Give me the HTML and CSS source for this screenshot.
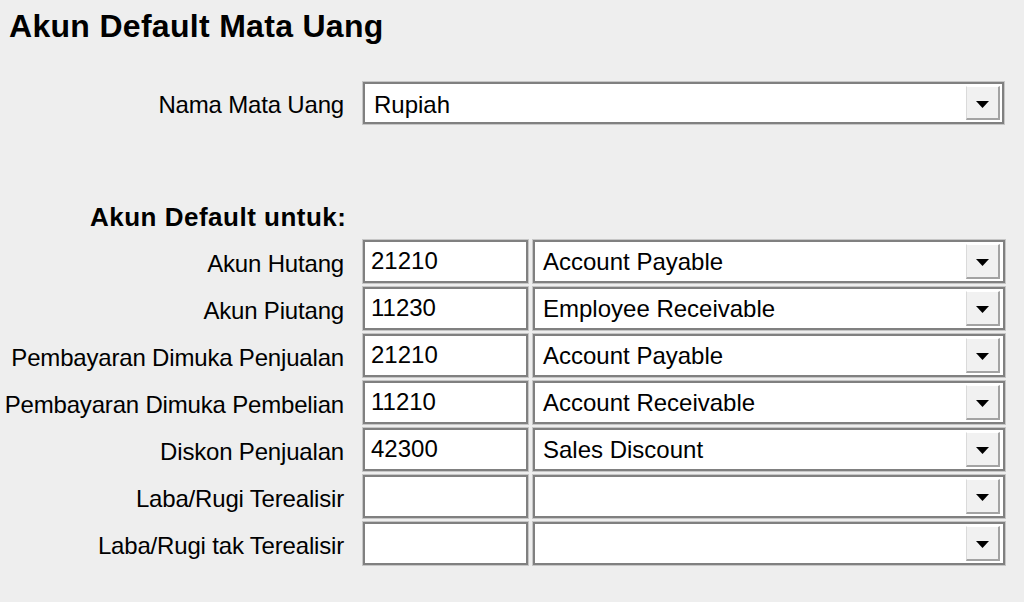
FILE: index.html
```html
<!DOCTYPE html>
<html lang="id">
<head>
<meta charset="utf-8">
<title>Akun Default Mata Uang</title>
<link rel="stylesheet" href="styles.css">
</head>
<body>
<div class="page">
  <h1 class="title">Akun Default Mata Uang</h1>

  <div class="row row-currency">
    <span class="lbl">Nama Mata Uang</span>
    <div class="combo combo-currency">
      <span class="combo-text">Rupiah</span>
      <span class="drop"><svg width="13" height="7" viewBox="0 0 13 7"><polygon points="0,0 13,0 6.5,7" fill="#000"/></svg></span>
    </div>
  </div>

  <div class="section">Akun Default untuk:</div>

  <div class="rows">
    <div class="row">
      <span class="lbl">Akun Hutang</span>
      <div class="edit">21210</div>
      <div class="combo"><span class="combo-text">Account Payable</span><span class="drop"><svg width="13" height="7" viewBox="0 0 13 7"><polygon points="0,0 13,0 6.5,7" fill="#000"/></svg></span></div>
    </div>
    <div class="row">
      <span class="lbl">Akun Piutang</span>
      <div class="edit">11230</div>
      <div class="combo"><span class="combo-text">Employee Receivable</span><span class="drop"><svg width="13" height="7" viewBox="0 0 13 7"><polygon points="0,0 13,0 6.5,7" fill="#000"/></svg></span></div>
    </div>
    <div class="row">
      <span class="lbl">Pembayaran Dimuka Penjualan</span>
      <div class="edit">21210</div>
      <div class="combo"><span class="combo-text">Account Payable</span><span class="drop"><svg width="13" height="7" viewBox="0 0 13 7"><polygon points="0,0 13,0 6.5,7" fill="#000"/></svg></span></div>
    </div>
    <div class="row">
      <span class="lbl">Pembayaran Dimuka Pembelian</span>
      <div class="edit">11210</div>
      <div class="combo"><span class="combo-text">Account Receivable</span><span class="drop"><svg width="13" height="7" viewBox="0 0 13 7"><polygon points="0,0 13,0 6.5,7" fill="#000"/></svg></span></div>
    </div>
    <div class="row">
      <span class="lbl">Diskon Penjualan</span>
      <div class="edit">42300</div>
      <div class="combo"><span class="combo-text">Sales Discount</span><span class="drop"><svg width="13" height="7" viewBox="0 0 13 7"><polygon points="0,0 13,0 6.5,7" fill="#000"/></svg></span></div>
    </div>
    <div class="row">
      <span class="lbl">Laba/Rugi Terealisir</span>
      <div class="edit"></div>
      <div class="combo"><span class="combo-text"></span><span class="drop"><svg width="13" height="7" viewBox="0 0 13 7"><polygon points="0,0 13,0 6.5,7" fill="#000"/></svg></span></div>
    </div>
    <div class="row">
      <span class="lbl">Laba/Rugi tak Terealisir</span>
      <div class="edit"></div>
      <div class="combo"><span class="combo-text"></span><span class="drop"><svg width="13" height="7" viewBox="0 0 13 7"><polygon points="0,0 13,0 6.5,7" fill="#000"/></svg></span></div>
    </div>
  </div>
</div>
</body>
</html>
```

FILE: styles.css
```css
* { box-sizing: border-box; }

html, body {
  margin: 0;
  padding: 0;
  background: #eeeeee;
}

body {
  width: 1024px;
  height: 602px;
  overflow: hidden;
  font-family: "Liberation Sans", Arial, sans-serif;
  font-size: 24px;
  color: #000;
}

.page {
  padding-top: 8px;
}

.title {
  margin: 0 0 38px 0;
  padding-left: 9px;
  font-size: 32px;
  line-height: 36px;
  font-weight: bold;
  letter-spacing: 0.3px;
}

.row {
  display: flex;
  align-items: center;
  height: 43px;
}

.row-currency {
  height: 42px;
}

.lbl {
  width: 344px;
  margin-right: 19px;
  text-align: right;
  white-space: nowrap;
  line-height: 43px;
  padding-top: 3px;
  letter-spacing: -0.18px;
}

.section {
  margin: 78px 0 8px 90px;
  font-size: 26px;
  line-height: 30px;
  font-weight: bold;
  letter-spacing: 0.5px;
}

.rows {
  display: flex;
  flex-direction: column;
  gap: 4px;
}

.edit,
.combo {
  height: 43px;
  background: #fff;
  border: 2px solid #808080;
  box-shadow: 0 0 0 1px #c6c6c6;
  white-space: nowrap;
}

.edit {
  width: 165px;
  margin-right: 5px;
  padding: 0 0 2px 6px;
  display: flex;
  align-items: center;
}

.combo {
  width: 472px;
  display: flex;
  align-items: center;
  padding-right: 3px;
}

.combo-currency {
  width: 641px;
  height: 42px;
  padding-right: 2px;
}

.combo-text {
  flex: 1;
  padding-left: 8px;
  padding-top: 1px;
}

.combo-currency .combo-text {
  padding-left: 9px;
  padding-top: 3px;
}

.drop {
  width: 34px;
  height: 35px;
  background: #f1f1f1;
  border-style: solid;
  border-width: 1px 2px 2px 1px;
  border-color: #ffffff #a3a3a3 #a3a3a3 #dadada;
  display: flex;
  align-items: center;
  justify-content: center;
  padding-top: 3px;
}

.combo-currency .drop {
  height: 34px;
}

.drop svg {
  display: block;
}
```
